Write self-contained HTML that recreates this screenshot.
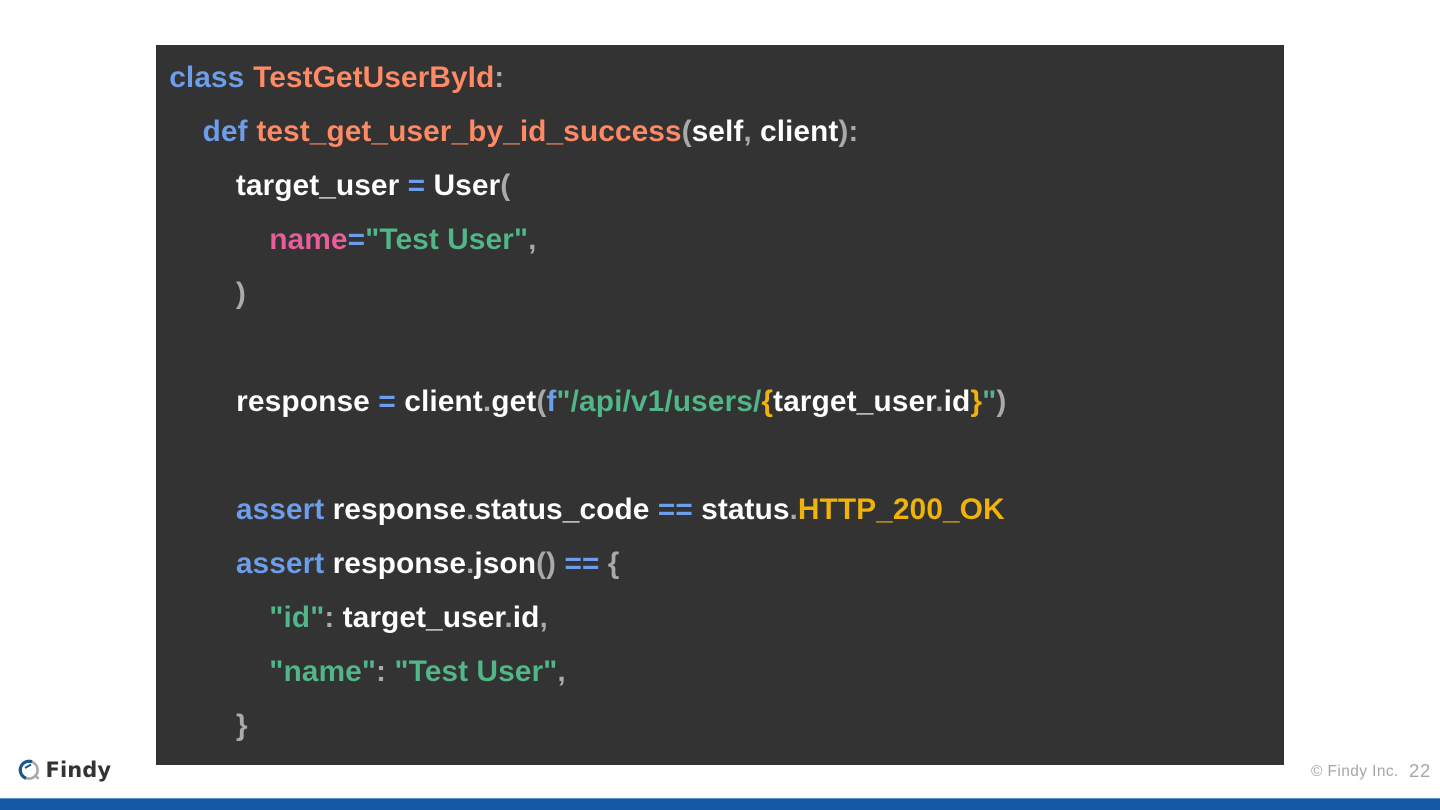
<!DOCTYPE html>
<html><head><meta charset="utf-8"><style>
html,body{margin:0;padding:0;width:1440px;height:810px;background:#fff;overflow:hidden}
#code{position:absolute;left:156px;top:45px;width:1128px;height:720px;background:#333;overflow:hidden}
pre{position:absolute;left:13.2px;top:6px;margin:0;font:bold 30px/54px "Liberation Sans",sans-serif;color:#fff;white-space:pre;-webkit-text-stroke:.1px #333}
.k{color:#6d9eeb}.f{color:#ff8a65;margin-left:.5px}.p{color:#aaa}.s{color:#52b788}.n{color:#e85d9a}.y{color:#f1b30a}
.w{letter-spacing:.04px}
#bar{position:absolute;left:0;top:798px;width:1440px;height:12px;background:#1558a6;border-top:1px solid #5f94cf;box-sizing:border-box}
#logo{position:absolute;left:17px;top:758px}
#fin{position:absolute;left:45.5px;top:755px;font:bold 21px/30px "DejaVu Sans",sans-serif;color:#333;letter-spacing:.1px}
#copy{position:absolute;left:1311px;top:762.5px;font:15.5px/18px "Liberation Sans",sans-serif;color:#a6a6a6;letter-spacing:.4px;white-space:pre}
#num{position:absolute;left:1409px;top:761px;font:18.5px/20px "Liberation Sans",sans-serif;color:#a6a6a6;letter-spacing:.7px}
</style></head><body>
<div id="code"><pre><span class="k">class</span> <span class="f">TestGetUserById</span><span class="p">:</span>
    <span class="k">def</span> <span class="f">test_get_user_by_id_success</span><span class="p">(</span>self<span class="p">,</span> client<span class="p">):</span>
        target_user <span class="k">=</span> User<span class="p">(</span>
            <span class="n">name</span><span class="k">=</span><span class="s">"Test User"</span><span class="p">,</span>
        <span class="p">)</span>

<span class="w">        response <span class="k">=</span> client<span class="p">.</span>get<span class="p">(</span><span class="k">f</span><span class="s">"/api/v1/users/</span><span class="y">{</span>target_user<span class="p">.</span>id<span class="y">}</span><span class="s">"</span><span class="p">)</span></span>

        <span class="k">assert</span> response<span class="p">.</span>status_code <span class="k">==</span> status<span class="p">.</span><span class="y">HTTP_200_OK</span>
        <span class="k">assert</span> response<span class="p">.</span>json<span class="p">()</span> <span class="k">==</span> <span class="p">{</span>
            <span class="s">"id"</span><span class="p">:</span> target_user<span class="p">.</span>id<span class="p">,</span>
            <span class="s">"name"</span><span class="p">:</span> <span class="s">"Test User"</span><span class="p">,</span>
        <span class="p">}</span></pre></div>
<svg id="logo" width="24" height="24" viewBox="0 0 24 24" fill="none">
<circle cx="12" cy="12" r="8.6" stroke="#a5aaaf" stroke-width="2.6"/>
<path d="M18.5 17.5L21.5 21" stroke="#a5aaaf" stroke-width="2.4"/>
<path d="M15 3.8A8.7 8.7 0 0 0 9 20.2" stroke="#17568f" stroke-width="3.2"/>
<path d="M8 10L14 6.5" stroke="#17568f" stroke-width="2"/>
</svg>
<div id="fin">Findy</div>
<div id="copy">© Findy Inc.</div>
<div id="num">22</div>
<div id="bar"></div>
</body></html>
